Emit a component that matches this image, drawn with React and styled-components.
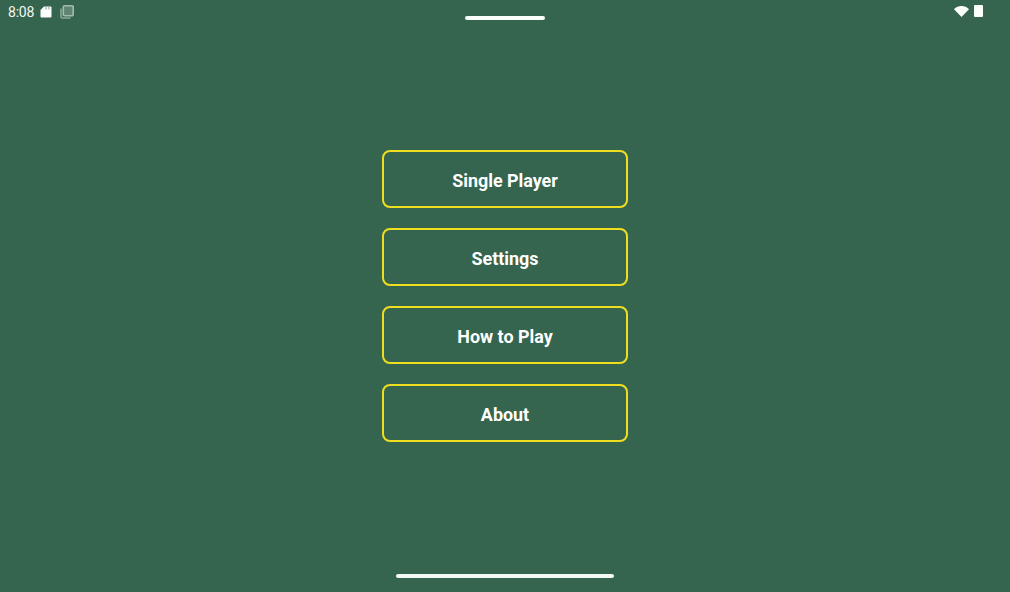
import React from 'react';
import styled, { createGlobalStyle } from 'styled-components';

const GlobalStyle = createGlobalStyle`
  html, body {
    margin: 0;
    padding: 0;
    background-color: #35654e;
  }
`;

const items = ['Single Player', 'Settings', 'How to Play', 'About'];

const App = () => {
  return (
    <>
      <GlobalStyle />
      <Page>
        <StatusBar>
          <LeftGroup>
            <Time>8:08</Time>
            <SdCard viewBox="0 0 12 12">
              <path
                d="M4 0.5H10.5a1 1 0 0 1 1 1V10.5a1 1 0 0 1-1 1H1.5a1 1 0 0 1-1-1V4Z"
                fill="#fdfffd"
              />
              <path d="M6 1V3.5M9 1V3.5" stroke="#7f9f8e" strokeWidth="1" />
            </SdCard>
            <CopyIcon viewBox="0 0 14 14">
              <path d="M4.5 0.8H12a1.2 1.2 0 0 1 1.2 1.2V9.5a1.2 1.2 0 0 1-1.2 1.2H4.5a1.2 1.2 0 0 1-1.2-1.2V2a1.2 1.2 0 0 1 1.2-1.2Z" fill="#5f8572" stroke="#a3bbae" strokeWidth="1.6" />
              <path d="M1 3.5V11.5A1.5 1.5 0 0 0 2.5 13H10.5" fill="none" stroke="#8aa898" strokeWidth="1.6" />
            </CopyIcon>
          </LeftGroup>
          <Handle />
          <RightGroup>
            <Wifi viewBox="0 0 15 11">
              <path d="M0 3.2C4 -1 11 -1 15 3.2L7.5 11Z" fill="#fdfffd" />
            </Wifi>
            <Battery />
          </RightGroup>
        </StatusBar>
        <Menu>
          {items.map((item) => (
            <MenuButton key={item}>{item}</MenuButton>
          ))}
        </Menu>
        <HomeBar />
      </Page>
    </>
  );
};

export default App;

const Page = styled.main`
  display: flex;
  flex-direction: column;
  align-items: center;
  height: 592px;
  overflow: hidden;
  background-color: #35654e;
  font-family: Roboto, "Liberation Sans", sans-serif;
  color: #ffffff;
`;

const StatusBar = styled.header`
  display: grid;
  grid-template-columns: 1fr 80px 1fr;
  align-items: start;
  width: 100%;
  height: 24px;
  box-sizing: border-box;
  padding: 5px 8px 0;
`;

const LeftGroup = styled.div`
  display: flex;
  align-items: center;
  height: 14px;
`;

const Time = styled.span`
  font-size: 14px;
  line-height: 14px;
  letter-spacing: -0.2px;
  color: #f2f7f3;
`;

const SdCard = styled.svg`
  width: 12px;
  height: 12px;
  margin-left: 6px;
`;

const CopyIcon = styled.svg`
  width: 14px;
  height: 14px;
  margin-left: 8px;
`;

const Handle = styled.div`
  width: 80px;
  height: 4px;
  margin-top: 10.5px;
  border-radius: 2px;
  background-color: #fbfffb;
`;

const RightGroup = styled.div`
  display: flex;
  justify-content: flex-end;
  align-items: flex-start;
  gap: 5px;
  padding-right: 19px;
`;

const Wifi = styled.svg`
  width: 15px;
  height: 11px;
  margin-top: 1px;
`;

const Battery = styled.div`
  width: 9px;
  height: 12px;
  border-radius: 1px;
  background-color: #fdfffd;
`;

const Menu = styled.nav`
  display: flex;
  flex-direction: column;
  gap: 20px;
  margin-top: 126px;
`;

const MenuButton = styled.button`
  width: 246px;
  height: 58px;
  padding: 2px 0 0;
  box-sizing: border-box;
  border: 2px solid #eede1f;
  border-radius: 8px;
  background: transparent;
  font-family: inherit;
  font-size: 17.9px;
  font-weight: 700;
  color: #ffffff;
`;

const HomeBar = styled.div`
  width: 218px;
  height: 4px;
  margin-top: auto;
  margin-bottom: 14px;
  border-radius: 2px;
  background-color: #f4faf5;
`;
